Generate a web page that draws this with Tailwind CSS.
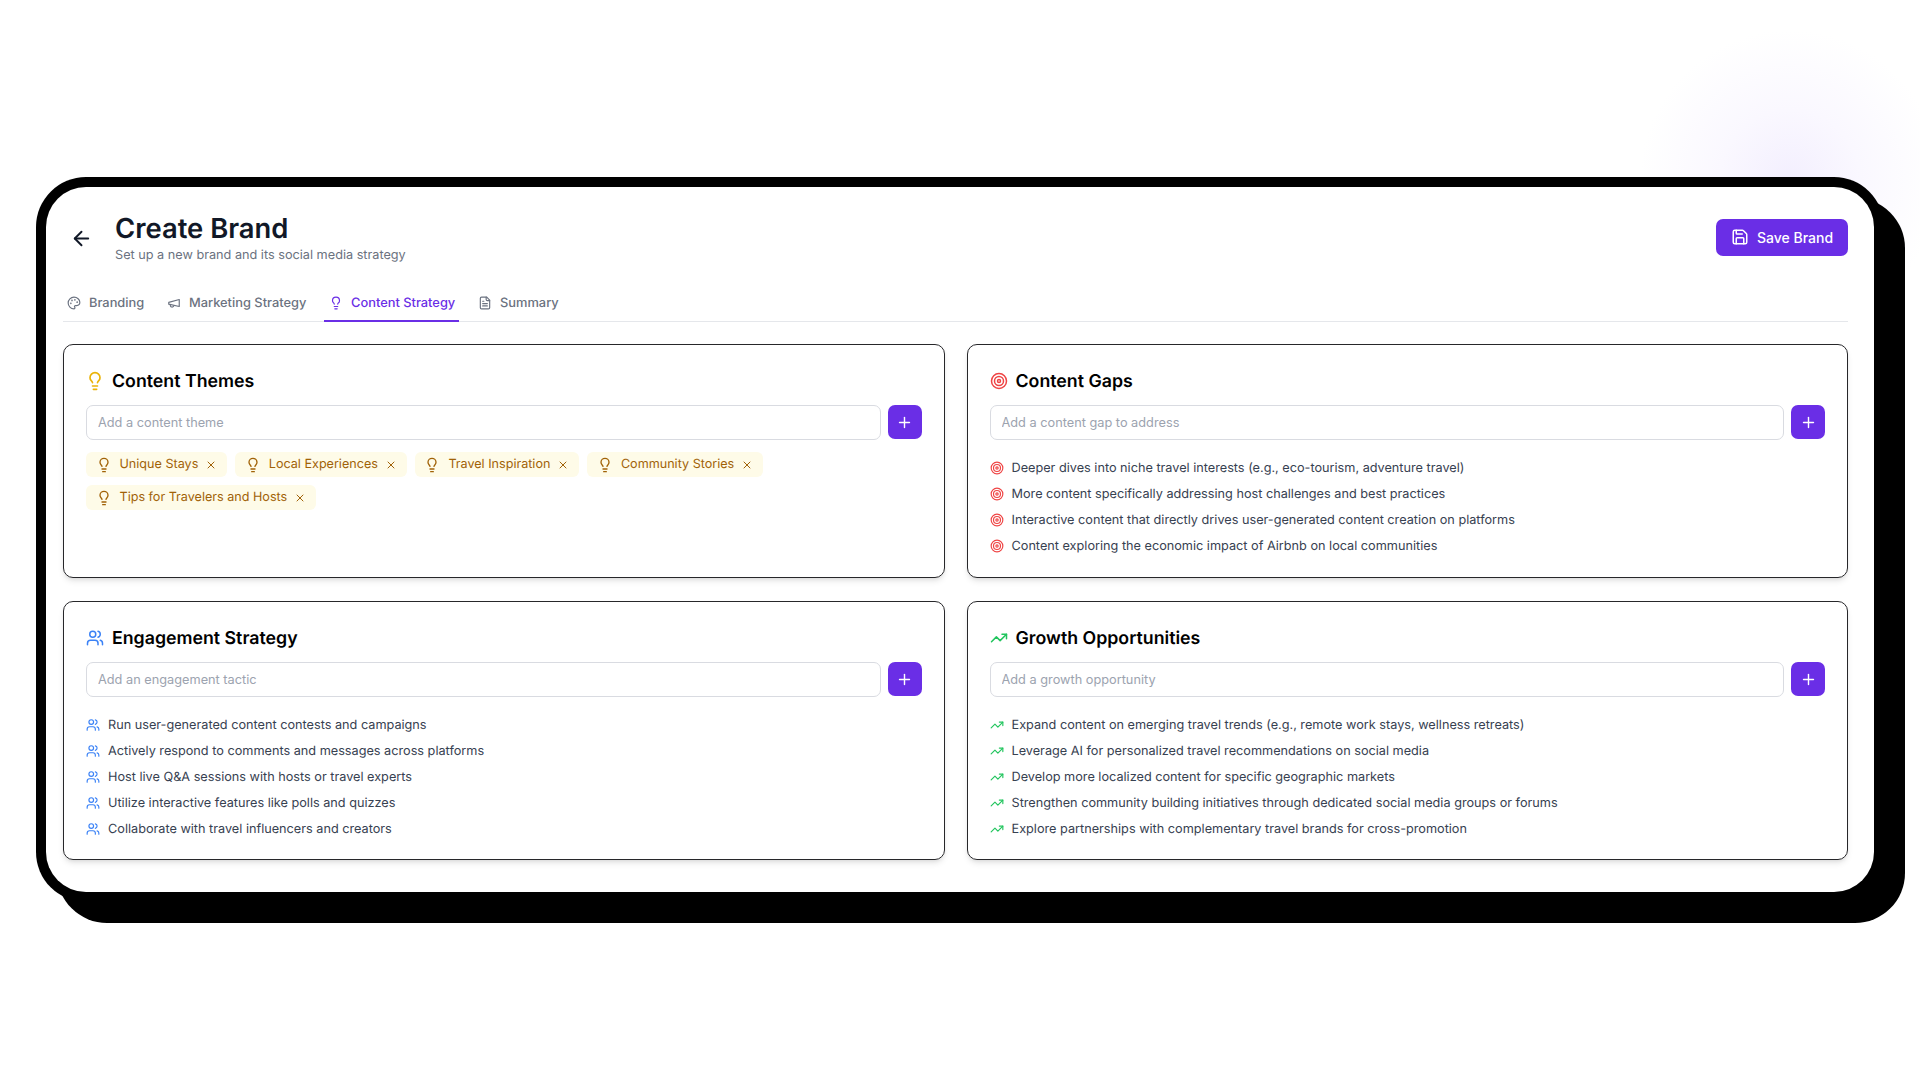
<!DOCTYPE html>
<html lang="en">
  <head>
    <meta charset="UTF-8" />
    <meta name="viewport" content="width=device-width, initial-scale=1.0" />
    <title>Create Brand</title>
    <script src="https://cdn.jsdelivr.net/npm/@tailwindcss/browser@4"></script>
  </head>
  <body class="h-screen overflow-hidden font-[Inter,sans-serif] antialiased [text-rendering:geometricPrecision] bg-white bg-[radial-gradient(circle_at_1790px_180px,#f3effe_0,#faf8ff_70px,#ffffff_150px)] pt-[187px] pl-[46px]">
    <svg class="hidden">
      <symbol id="bulb" viewBox="0 0 24 24"><path d="M15 14c.2-1 .7-1.7 1.5-2.5 1-.9 1.5-2.2 1.5-3.5A6 6 0 0 0 6 8c0 1 .2 2.2 1.5 3.5.7.7 1.3 1.5 1.5 2.5"/><path d="M9 18h6"/><path d="M10 22h4"/></symbol>
      <symbol id="target" viewBox="0 0 24 24"><circle cx="12" cy="12" r="10"/><circle cx="12" cy="12" r="6"/><circle cx="12" cy="12" r="2"/></symbol>
      <symbol id="users" viewBox="0 0 24 24"><path d="M16 21v-2a4 4 0 0 0-4-4H6a4 4 0 0 0-4 4v2"/><circle cx="9" cy="7" r="4"/><path d="M22 21v-2a4 4 0 0 0-3-3.87"/><path d="M16 3.13a4 4 0 0 1 0 7.75"/></symbol>
      <symbol id="trend" viewBox="0 0 24 24"><polyline points="22 7 13.5 15.5 8.5 10.5 2 17"/><polyline points="16 7 22 7 22 13"/></symbol>
      <symbol id="plus" viewBox="0 0 24 24"><path d="M5 12h14"/><path d="M12 5v14"/></symbol>
      <symbol id="x" viewBox="0 0 24 24"><path d="M18 6 6 18"/><path d="m6 6 12 12"/></symbol>
    </svg>

    <div class="w-[1828px] h-[705px] bg-white rounded-[40px] shadow-[0_0_0_10px_#000,21px_21px_0_10px_#000] pl-[17px] pr-[26px] pt-[23px]">
      <!-- header -->
      <div class="flex items-center h-[54px]">
        <svg class="w-[23px] h-[23px] ml-[7px] mr-[22px] translate-y-px text-[#111827]" viewBox="0 0 24 24" fill="none" stroke="currentColor" stroke-width="2" stroke-linecap="round" stroke-linejoin="round"><path d="m12 19-7-7 7-7"/><path d="M19 12H5"/></svg>
        <div class="self-start pt-[2px]">
          <h1 class="text-[27.4px] leading-[32px] font-semibold text-[#111827]">Create Brand</h1>
          <p class="mt-[2px] text-[12.7px] leading-[20px] text-[#6b7280]">Set up a new brand and its social media strategy</p>
        </div>
        <button class="ml-auto h-[37px] w-[132px] flex items-center justify-center gap-[8px] rounded-[7px] bg-[#6a2ee6] text-white text-[14px] font-medium">
          <svg class="w-[18px] h-[18px]" viewBox="0 0 24 24" fill="none" stroke="currentColor" stroke-width="2" stroke-linecap="round" stroke-linejoin="round"><path d="M15.2 3a2 2 0 0 1 1.4.6l3.8 3.8a2 2 0 0 1 .6 1.4V19a2 2 0 0 1-2 2H5a2 2 0 0 1-2-2V5a2 2 0 0 1 2-2z"/><path d="M17 21v-7a1 1 0 0 0-1-1H8a1 1 0 0 0-1 1v7"/><path d="M7 3v4a1 1 0 0 0 1 1h7"/></svg>
          Save Brand
        </button>
      </div>

      <!-- tabs -->
      <div class="flex mt-[16px] h-[42px] border-b border-[#e5e7eb] text-[12.85px] font-medium text-[#6b7280]">
        <div class="flex items-center gap-[8px] pl-[4px] pr-[4px] pt-[7px] w-[90px]">
          <svg class="w-[14px] h-[14px] shrink-0 -translate-y-px" viewBox="0 0 24 24" fill="none" stroke="currentColor" stroke-width="2" stroke-linecap="round" stroke-linejoin="round"><circle cx="13.5" cy="6.5" r=".5" fill="currentColor"/><circle cx="17.5" cy="10.5" r=".5" fill="currentColor"/><circle cx="8.5" cy="7.5" r=".5" fill="currentColor"/><circle cx="6.5" cy="12.5" r=".5" fill="currentColor"/><path d="M12 2C6.5 2 2 6.5 2 12s4.5 10 10 10c.926 0 1.648-.746 1.648-1.688 0-.437-.18-.835-.437-1.125-.29-.289-.438-.652-.438-1.125a1.64 1.64 0 0 1 1.668-1.668h1.996c3.051 0 5.555-2.503 5.555-5.554C21.965 6.012 17.461 2 12 2z"/></svg>
          Branding
        </div>
        <div class="flex items-center gap-[8px] pl-[14px] pt-[7px] w-[171px]">
          <svg class="w-[14px] h-[14px] shrink-0 -translate-y-px" viewBox="0 0 24 24" fill="none" stroke="currentColor" stroke-width="2" stroke-linecap="round" stroke-linejoin="round"><path d="m3 11 18-5v12L3 14v-3z"/><path d="M11.6 16.8a3 3 0 1 1-5.8-1.6"/></svg>
          Marketing Strategy
        </div>
        <div class="flex items-center gap-[8px] pl-[5px] pt-[8px] w-[135px] h-[42px] border-b-2 border-[#6a2ee6] text-[#6a2ee6]">
          <svg class="w-[14px] h-[14px] shrink-0 -translate-y-px" fill="none" stroke="currentColor" stroke-width="2" stroke-linecap="round" stroke-linejoin="round"><use href="#bulb"/></svg>
          Content Strategy
        </div>
        <div class="flex items-center gap-[8px] pl-[19px] pt-[7px]">
          <svg class="w-[14px] h-[14px] shrink-0 -translate-y-px" viewBox="0 0 24 24" fill="none" stroke="currentColor" stroke-width="2" stroke-linecap="round" stroke-linejoin="round"><path d="M15 2H6a2 2 0 0 0-2 2v16a2 2 0 0 0 2 2h12a2 2 0 0 0 2-2V7Z"/><path d="M14 2v4a2 2 0 0 0 2 2h4"/><path d="M10 9H8"/><path d="M16 13H8"/><path d="M16 17H8"/></svg>
          Summary
        </div>
      </div>

      <!-- cards -->
      <div class="grid grid-cols-2 grid-rows-[234px_259px] gap-x-[22px] gap-y-[23px] mt-[22px]">
        <section class="rounded-[10px] border border-[#27272a] shadow-md px-[22px] pt-[24px]">
          <h2 class="flex items-center gap-[8px] h-[24px] pt-[2px] text-[17.75px] font-semibold text-black">
            <svg class="w-[20px] h-[20px] -ml-[1px] -mr-[1px] -translate-y-px text-[#eab308]" fill="none" stroke="currentColor" stroke-width="2" stroke-linecap="round" stroke-linejoin="round"><use href="#bulb"/></svg>
            Content Themes
          </h2>
          <div class="flex gap-[7px] mt-[12px]">
            <input class="flex-1 h-[35px] rounded-[7px] border border-[#d9dbe1] px-[11px] text-[12.75px] placeholder:text-[#9ca3af] outline-none" placeholder="Add a content theme" />
            <button class="w-[34px] h-[34px] rounded-[7px] bg-[#6a2ee6] text-white flex items-center justify-center"><svg class="w-[17px] h-[17px]" fill="none" stroke="currentColor" stroke-width="2" stroke-linecap="round"><use href="#plus"/></svg></button>
          </div>
          <div class="flex flex-wrap gap-x-[8px] gap-y-[8px] mt-[12px] text-[12.6px] text-[#a16207]">
            <span class="flex items-center h-[25px] pt-[2px] rounded-[6px] bg-[#fefbe8] pl-[9.5px] pr-[10px]"><svg class="w-[16px] h-[16px] mr-[8px] -translate-y-px" fill="none" stroke="currentColor" stroke-width="2" stroke-linecap="round" stroke-linejoin="round"><use href="#bulb"/></svg>Unique Stays<svg class="w-[12px] h-[12px] ml-[7px] -translate-y-px" fill="none" stroke="currentColor" stroke-width="2" stroke-linecap="round"><use href="#x"/></svg></span>
            <span class="flex items-center h-[25px] pt-[2px] rounded-[6px] bg-[#fefbe8] pl-[9.5px] pr-[10px]"><svg class="w-[16px] h-[16px] mr-[8px] -translate-y-px" fill="none" stroke="currentColor" stroke-width="2" stroke-linecap="round" stroke-linejoin="round"><use href="#bulb"/></svg>Local Experiences<svg class="w-[12px] h-[12px] ml-[7px] -translate-y-px" fill="none" stroke="currentColor" stroke-width="2" stroke-linecap="round"><use href="#x"/></svg></span>
            <span class="flex items-center h-[25px] pt-[2px] rounded-[6px] bg-[#fefbe8] pl-[9.5px] pr-[10px]"><svg class="w-[16px] h-[16px] mr-[8px] -translate-y-px" fill="none" stroke="currentColor" stroke-width="2" stroke-linecap="round" stroke-linejoin="round"><use href="#bulb"/></svg>Travel Inspiration<svg class="w-[12px] h-[12px] ml-[7px] -translate-y-px" fill="none" stroke="currentColor" stroke-width="2" stroke-linecap="round"><use href="#x"/></svg></span>
            <span class="flex items-center h-[25px] pt-[2px] rounded-[6px] bg-[#fefbe8] pl-[9.5px] pr-[10px]"><svg class="w-[16px] h-[16px] mr-[8px] -translate-y-px" fill="none" stroke="currentColor" stroke-width="2" stroke-linecap="round" stroke-linejoin="round"><use href="#bulb"/></svg>Community Stories<svg class="w-[12px] h-[12px] ml-[7px] -translate-y-px" fill="none" stroke="currentColor" stroke-width="2" stroke-linecap="round"><use href="#x"/></svg></span>
            <span class="flex items-center h-[25px] pt-[2px] rounded-[6px] bg-[#fefbe8] pl-[9.5px] pr-[10px]"><svg class="w-[16px] h-[16px] mr-[8px] -translate-y-px" fill="none" stroke="currentColor" stroke-width="2" stroke-linecap="round" stroke-linejoin="round"><use href="#bulb"/></svg>Tips for Travelers and Hosts<svg class="w-[12px] h-[12px] ml-[7px] -translate-y-px" fill="none" stroke="currentColor" stroke-width="2" stroke-linecap="round"><use href="#x"/></svg></span>
          </div>
        </section>

        <section class="rounded-[10px] border border-[#27272a] shadow-md px-[22px] pt-[24px]">
          <h2 class="flex items-center gap-[8px] h-[24px] pt-[2px] text-[17.75px] font-semibold text-black">
            <svg class="w-[18px] h-[18px] -translate-y-px text-[#ef4444]" fill="none" stroke="currentColor" stroke-width="2"><use href="#target"/></svg>
            Content Gaps
          </h2>
          <div class="flex gap-[7px] mt-[12px]">
            <input class="flex-1 h-[35px] rounded-[7px] border border-[#d9dbe1] px-[11px] text-[12.75px] placeholder:text-[#9ca3af] outline-none" placeholder="Add a content gap to address" />
            <button class="w-[34px] h-[34px] rounded-[7px] bg-[#6a2ee6] text-white flex items-center justify-center"><svg class="w-[17px] h-[17px]" fill="none" stroke="currentColor" stroke-width="2" stroke-linecap="round"><use href="#plus"/></svg></button>
          </div>
          <ul class="mt-[16px] text-[12.7px] text-[#374151]">
            <li class="flex items-center gap-[8px] h-[26px]"><svg class="w-[14px] h-[14px] -translate-y-px text-[#ef4444]" fill="none" stroke="currentColor" stroke-width="2"><use href="#target"/></svg>Deeper dives into niche travel interests (e.g., eco-tourism, adventure travel)</li>
            <li class="flex items-center gap-[8px] h-[26px]"><svg class="w-[14px] h-[14px] -translate-y-px text-[#ef4444]" fill="none" stroke="currentColor" stroke-width="2"><use href="#target"/></svg>More content specifically addressing host challenges and best practices</li>
            <li class="flex items-center gap-[8px] h-[26px]"><svg class="w-[14px] h-[14px] -translate-y-px text-[#ef4444]" fill="none" stroke="currentColor" stroke-width="2"><use href="#target"/></svg>Interactive content that directly drives user-generated content creation on platforms</li>
            <li class="flex items-center gap-[8px] h-[26px]"><svg class="w-[14px] h-[14px] -translate-y-px text-[#ef4444]" fill="none" stroke="currentColor" stroke-width="2"><use href="#target"/></svg>Content exploring the economic impact of Airbnb on local communities</li>
          </ul>
        </section>

        <section class="rounded-[10px] border border-[#27272a] shadow-md px-[22px] pt-[24px]">
          <h2 class="flex items-center gap-[8px] h-[24px] pt-[2px] text-[17.75px] font-semibold text-black">
            <svg class="w-[18px] h-[18px] -translate-y-px text-[#3b82f6]" fill="none" stroke="currentColor" stroke-width="2" stroke-linecap="round" stroke-linejoin="round"><use href="#users"/></svg>
            Engagement Strategy
          </h2>
          <div class="flex gap-[7px] mt-[12px]">
            <input class="flex-1 h-[35px] rounded-[7px] border border-[#d9dbe1] px-[11px] text-[12.75px] placeholder:text-[#9ca3af] outline-none" placeholder="Add an engagement tactic" />
            <button class="w-[34px] h-[34px] rounded-[7px] bg-[#6a2ee6] text-white flex items-center justify-center"><svg class="w-[17px] h-[17px]" fill="none" stroke="currentColor" stroke-width="2" stroke-linecap="round"><use href="#plus"/></svg></button>
          </div>
          <ul class="mt-[16px] text-[12.7px] text-[#374151]">
            <li class="flex items-center gap-[8px] h-[26px]"><svg class="w-[14px] h-[14px] -translate-y-px text-[#3b82f6]" fill="none" stroke="currentColor" stroke-width="2" stroke-linecap="round" stroke-linejoin="round"><use href="#users"/></svg>Run user-generated content contests and campaigns</li>
            <li class="flex items-center gap-[8px] h-[26px]"><svg class="w-[14px] h-[14px] -translate-y-px text-[#3b82f6]" fill="none" stroke="currentColor" stroke-width="2" stroke-linecap="round" stroke-linejoin="round"><use href="#users"/></svg>Actively respond to comments and messages across platforms</li>
            <li class="flex items-center gap-[8px] h-[26px]"><svg class="w-[14px] h-[14px] -translate-y-px text-[#3b82f6]" fill="none" stroke="currentColor" stroke-width="2" stroke-linecap="round" stroke-linejoin="round"><use href="#users"/></svg>Host live Q&amp;A sessions with hosts or travel experts</li>
            <li class="flex items-center gap-[8px] h-[26px]"><svg class="w-[14px] h-[14px] -translate-y-px text-[#3b82f6]" fill="none" stroke="currentColor" stroke-width="2" stroke-linecap="round" stroke-linejoin="round"><use href="#users"/></svg>Utilize interactive features like polls and quizzes</li>
            <li class="flex items-center gap-[8px] h-[26px]"><svg class="w-[14px] h-[14px] -translate-y-px text-[#3b82f6]" fill="none" stroke="currentColor" stroke-width="2" stroke-linecap="round" stroke-linejoin="round"><use href="#users"/></svg>Collaborate with travel influencers and creators</li>
          </ul>
        </section>

        <section class="rounded-[10px] border border-[#27272a] shadow-md px-[22px] pt-[24px]">
          <h2 class="flex items-center gap-[8px] h-[24px] pt-[2px] text-[17.75px] font-semibold text-black">
            <svg class="w-[18px] h-[18px] -translate-y-px text-[#22c55e]" fill="none" stroke="currentColor" stroke-width="2" stroke-linecap="round" stroke-linejoin="round"><use href="#trend"/></svg>
            Growth Opportunities
          </h2>
          <div class="flex gap-[7px] mt-[12px]">
            <input class="flex-1 h-[35px] rounded-[7px] border border-[#d9dbe1] px-[11px] text-[12.75px] placeholder:text-[#9ca3af] outline-none" placeholder="Add a growth opportunity" />
            <button class="w-[34px] h-[34px] rounded-[7px] bg-[#6a2ee6] text-white flex items-center justify-center"><svg class="w-[17px] h-[17px]" fill="none" stroke="currentColor" stroke-width="2" stroke-linecap="round"><use href="#plus"/></svg></button>
          </div>
          <ul class="mt-[16px] text-[12.7px] text-[#374151]">
            <li class="flex items-center gap-[8px] h-[26px]"><svg class="w-[14px] h-[14px] -translate-y-px text-[#22c55e]" fill="none" stroke="currentColor" stroke-width="2" stroke-linecap="round" stroke-linejoin="round"><use href="#trend"/></svg>Expand content on emerging travel trends (e.g., remote work stays, wellness retreats)</li>
            <li class="flex items-center gap-[8px] h-[26px]"><svg class="w-[14px] h-[14px] -translate-y-px text-[#22c55e]" fill="none" stroke="currentColor" stroke-width="2" stroke-linecap="round" stroke-linejoin="round"><use href="#trend"/></svg>Leverage AI for personalized travel recommendations on social media</li>
            <li class="flex items-center gap-[8px] h-[26px]"><svg class="w-[14px] h-[14px] -translate-y-px text-[#22c55e]" fill="none" stroke="currentColor" stroke-width="2" stroke-linecap="round" stroke-linejoin="round"><use href="#trend"/></svg>Develop more localized content for specific geographic markets</li>
            <li class="flex items-center gap-[8px] h-[26px]"><svg class="w-[14px] h-[14px] -translate-y-px text-[#22c55e]" fill="none" stroke="currentColor" stroke-width="2" stroke-linecap="round" stroke-linejoin="round"><use href="#trend"/></svg>Strengthen community building initiatives through dedicated social media groups or forums</li>
            <li class="flex items-center gap-[8px] h-[26px]"><svg class="w-[14px] h-[14px] -translate-y-px text-[#22c55e]" fill="none" stroke="currentColor" stroke-width="2" stroke-linecap="round" stroke-linejoin="round"><use href="#trend"/></svg>Explore partnerships with complementary travel brands for cross-promotion</li>
          </ul>
        </section>
      </div>
    </div>
  </body>
</html>
